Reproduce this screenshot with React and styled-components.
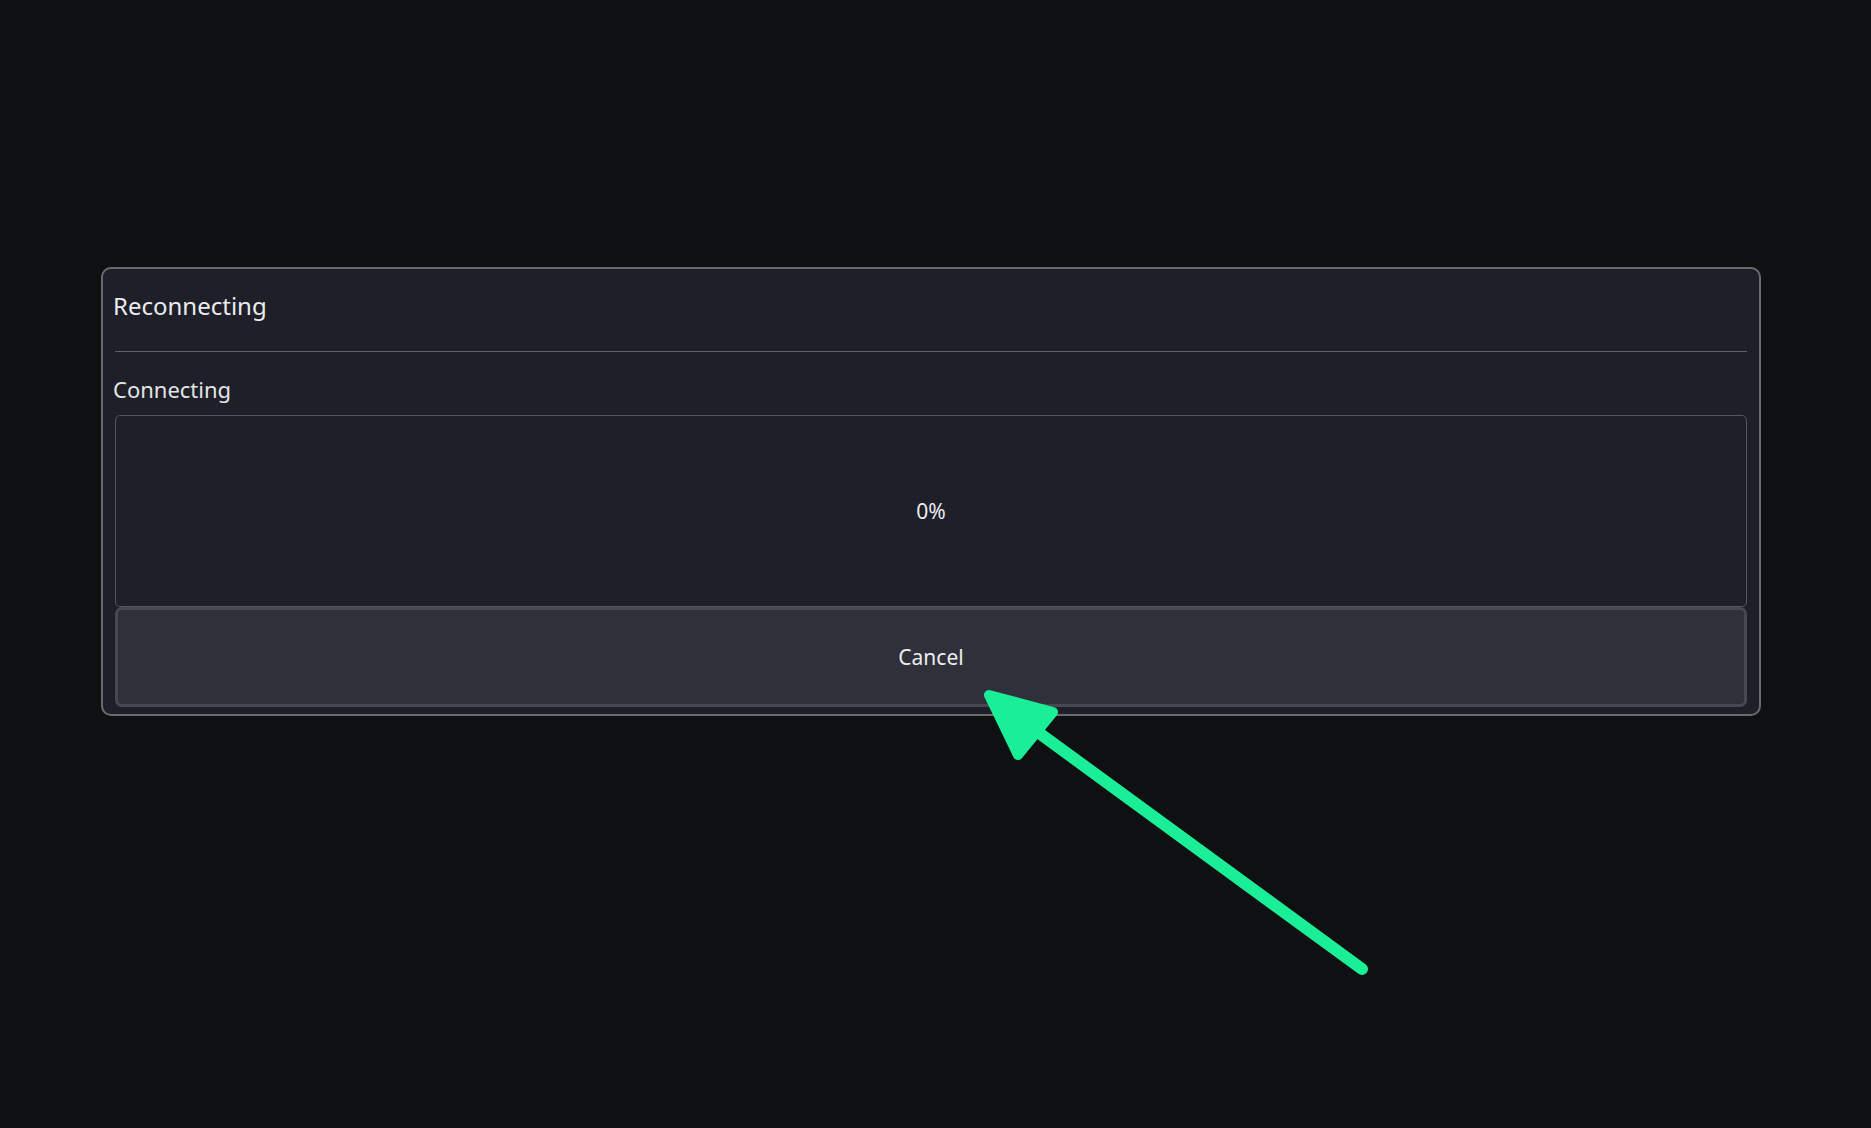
import React from "react";
import styled, { createGlobalStyle } from "styled-components";

const Global = createGlobalStyle`
  html, body { margin: 0; padding: 0; background: #0f1012; }
  body { font-family: "Noto Sans", "Open Sans", sans-serif; color: #e6e6e8; }
  * { box-sizing: border-box; }
`;

const Page = styled.div`
  position: relative;
  width: 1871px;
  height: 1128px;
  padding: 267px 0 0 101px;
  background: #0f1012;
  overflow: hidden;
`;

const Dialog = styled.div`
  width: 1660px;
  border: 2px solid #696a6e;
  border-radius: 10px;
  background: #1e1f28;
  padding: 0 12px 7px 12px;
  display: flex;
  flex-direction: column;
`;

const Title = styled.div`
  margin: 20px 0 0 -2px;
  font-size: 24px;
  line-height: 33px;
  color: #ececee;
`;

const Separator = styled.div`
  margin-top: 29px;
  height: 1px;
  background: #5e6066;
`;

const Label = styled.div`
  margin: 22px 0 0 -2px;
  font-size: 22px;
  line-height: 30px;
  color: #e4e4e6;
`;

const Progress = styled.div`
  margin-top: 11px;
  height: 192px;
  border: 1px solid #54565d;
  border-radius: 5px;
  display: flex;
  align-items: center;
  justify-content: center;
  font-size: 21px;
  color: #ececee;
  background: #1e1f28;
`;

const Button = styled.button`
  height: 100px;
  border: 3px solid #484853;
  border-radius: 7px;
  background: #30303a;
  color: #ececee;
  font-family: "Noto Sans", "Open Sans", sans-serif;
  font-size: 21px;
  display: flex;
  align-items: center;
  justify-content: center;
  cursor: pointer;
`;

const Overlay = styled.svg`
  position: absolute;
  left: 0;
  top: 0;
  width: 1871px;
  height: 1128px;
  pointer-events: none;
`;

export default function App() {
  return (
    <>
      <Global />
      <Page>
        <Dialog>
          <Title>Reconnecting</Title>
          <Separator />
          <Label>Connecting</Label>
          <Progress>0%</Progress>
          <Button>Cancel</Button>
        </Dialog>
        <Overlay viewBox="0 0 1871 1128">
          <line x1="1362" y1="969" x2="1035" y2="730" stroke="#1aef98" strokeWidth="12" strokeLinecap="round" />
          <polygon
            points="989,695 1053,712 1018,755"
            fill="#1aef98"
            stroke="#1aef98"
            strokeWidth="10"
            strokeLinejoin="round"
          />
        </Overlay>
      </Page>
    </>
  );
}
